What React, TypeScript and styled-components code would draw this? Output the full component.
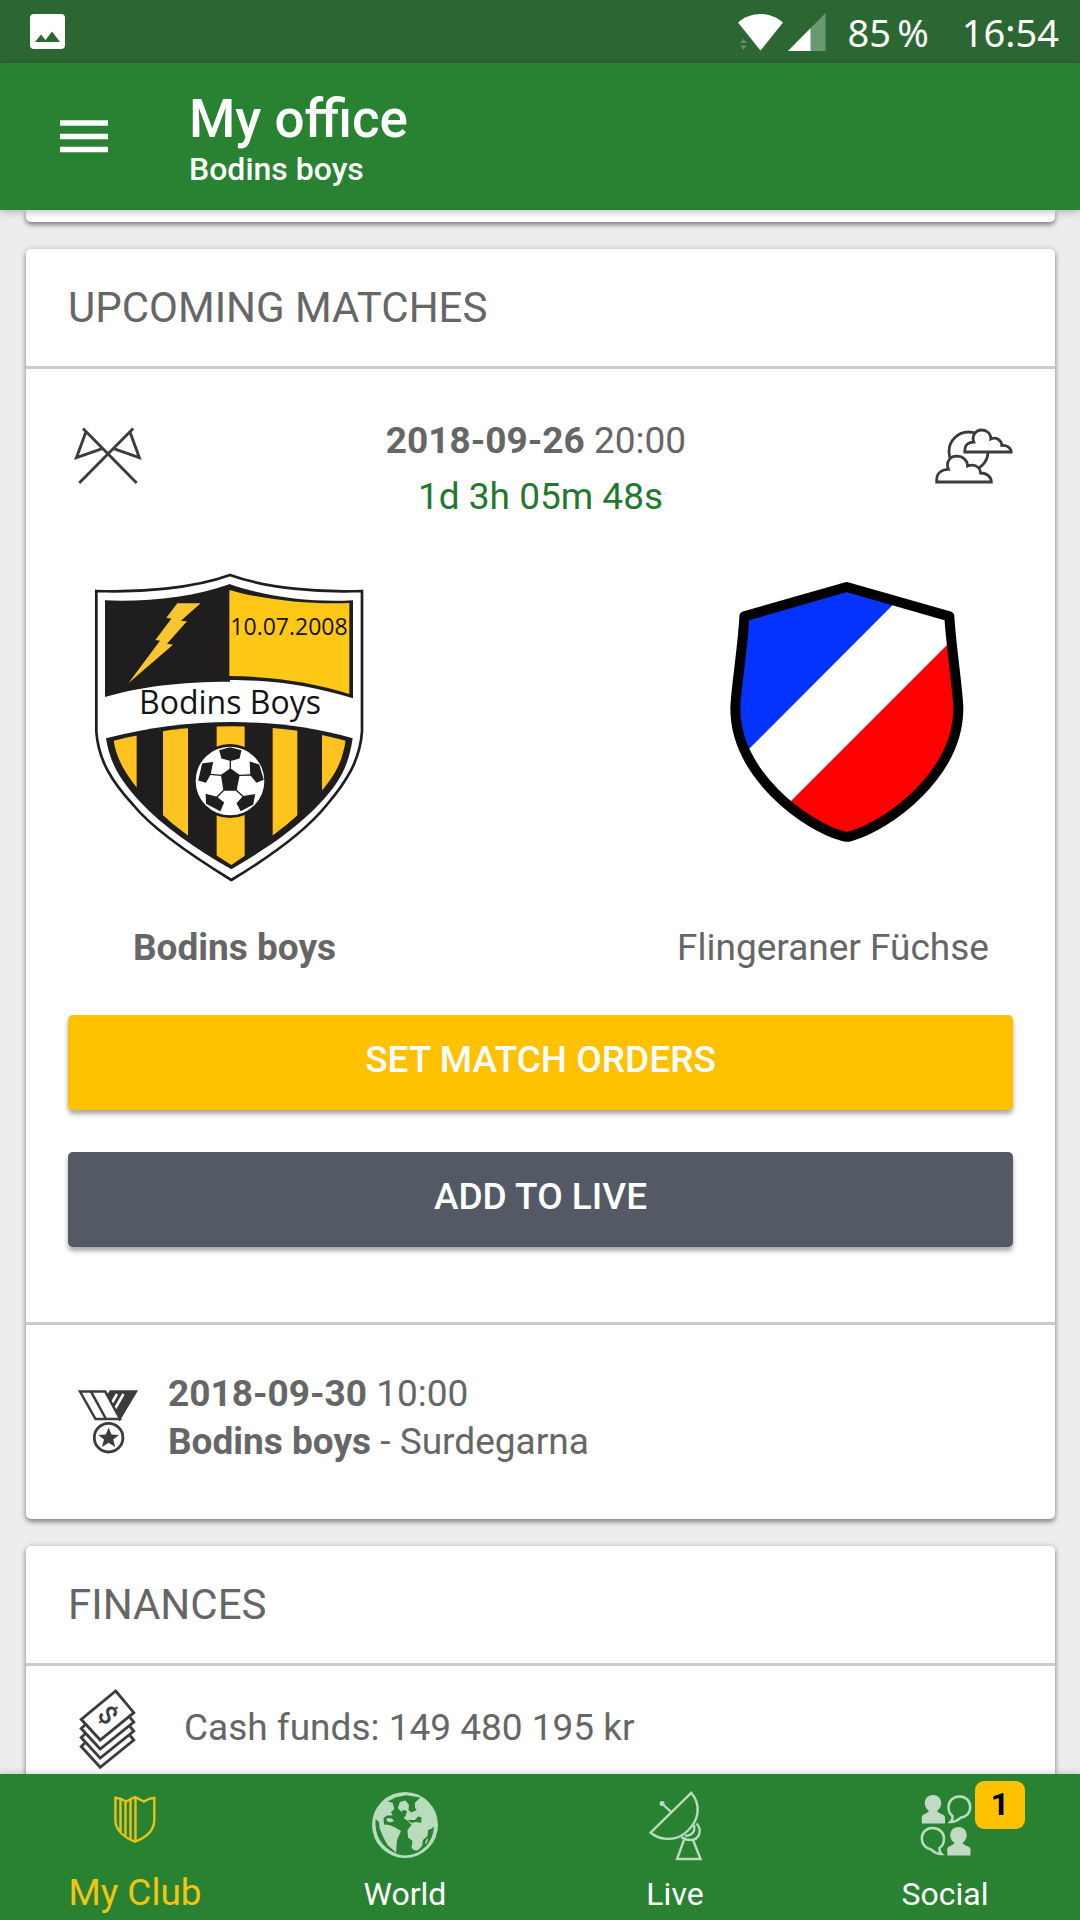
import React from "react";
import styled, { createGlobalStyle } from "styled-components";

const GlobalStyle = createGlobalStyle`
  *, *::before, *::after { box-sizing: border-box; }
  body {
    margin: 0;
    background: #ededed;
    font-family: Roboto, "Noto Sans", sans-serif;
    color: #666;
  }
  h1, h2, p { margin: 0; }
  svg { display: block; overflow: visible; }
`;

const Screen = styled.div`
  height: 100vh;
  display: flex;
  flex-direction: column;
  overflow: hidden;
`;

const StatusBar = styled.div`
  flex: none;
  height: 63px;
  padding: 0 21px 0 30px;
  display: flex;
  align-items: center;
  justify-content: space-between;
  background: #2c6632;
  color: #fff;
  font: 400 38px/60px "Noto Sans", sans-serif;
`;

const StatusGroup = styled.div`
  display: flex;
  align-items: center;
`;

const Battery = styled.span`
  margin: 0 33px 0 20px;
`;

const Header = styled.header`
  flex: none;
  position: relative;
  z-index: 1;
  display: flex;
  align-items: center;
  gap: 75px;
  padding: 26px 54px 21px;
  background: #298132;
  color: #fff;
  box-shadow: 0 2px 8px rgba(0, 0, 0, 0.25);
`;

const MenuButton = styled.button`
  padding: 0;
  border: 0;
  background: none;
  color: inherit;
`;

const Title = styled.h1`
  font-size: 53px;
  font-weight: 500;
  line-height: 60px;
`;

const Subtitle = styled.p`
  font-size: 32px;
  font-weight: 500;
  line-height: 40px;
`;

const Content = styled.main`
  flex: 1;
  min-height: 0;
  overflow: hidden;
  padding: 0 25px 0 26px;
  display: flex;
  flex-direction: column;
  gap: 27px;
`;

const Card = styled.section`
  flex: none;
  background: #fff;
  border-radius: 5px;
  box-shadow: 0 3px 5px rgba(0, 0, 0, 0.4), 0 0 6px rgba(0, 0, 0, 0.14);
`;

const CardEnd = styled(Card)`
  height: 12px;
  border-radius: 0 0 5px 5px;
`;

const CardTitle = styled.h2`
  padding: 34px 42px 33px;
  border-bottom: 3px solid #cbcbcb;
  font-size: 42px;
  font-weight: 400;
  line-height: 50px;
  text-transform: uppercase;
`;

const MatchBody = styled.div`
  padding: 44px 42px 75px;
  border-bottom: 3px solid #cbcbcb;
`;

const MatchInfo = styled.div`
  display: flex;
  justify-content: space-between;
  text-align: center;
  font-size: 37px;
  line-height: 56px;
`;

const Countdown = styled.p`
  color: #24782e;
`;

const Teams = styled.div`
  display: flex;
  justify-content: space-between;
  margin: 44px 0 43px;
`;

const Team = styled.div<{ $width: number; $home?: boolean }>`
  width: ${(p) => p.$width}px;
  display: flex;
  flex-direction: column;
  gap: 39px;
  text-align: center;
  font-size: 37px;
  line-height: 48px;
  font-weight: ${(p) => (p.$home ? 700 : 400)};
`;

const Actions = styled.div`
  display: flex;
  flex-direction: column;
  gap: 42px;
`;

const ActionButton = styled.button<{ $color: string }>`
  height: 95px;
  padding: 0 0 5px;
  border: 0;
  border-radius: 5px;
  background: ${(p) => p.$color};
  color: #fff;
  font: 500 37px/48px Roboto, sans-serif;
  text-transform: uppercase;
  box-shadow: 0 4px 5px rgba(0, 0, 0, 0.35);
`;

const NextMatch = styled.div`
  display: flex;
  align-items: center;
  gap: 20px;
  padding: 45px 42px 53px;
  font-size: 37px;
  line-height: 48px;
`;

const FinanceRow = styled.div`
  display: flex;
  align-items: center;
  gap: 36px;
  height: 124px;
  padding: 0 42px;
  font-size: 37px;
  line-height: 48px;
`;

const TabBar = styled.nav`
  flex: none;
  position: relative;
  z-index: 1;
  height: 146px;
  display: grid;
  grid-template-columns: repeat(4, 1fr);
  background: #298132;
  box-shadow: 0 -2px 6px rgba(0, 0, 0, 0.14);
`;

const Tab = styled.a<{ $active?: boolean }>`
  position: relative;
  display: flex;
  flex-direction: column;
  align-items: center;
  gap: 11px;
  padding-top: 16px;
  color: ${(p) => (p.$active ? "#f2c511" : "#fff")};
  text-decoration: none;
  font-size: 37px;
  line-height: 44px;

  svg {
    color: ${(p) => (p.$active ? "#e6c417" : "#b9dcbd")};
  }

  span {
    font-size: ${(p) => (p.$active ? 37 : 32)}px;
  }
`;

const Badge = styled.b`
  position: absolute;
  top: 7px;
  left: calc(50% + 30px);
  width: 50px;
  height: 48px;
  border-radius: 9px;
  background: #ffc100;
  color: #000;
  font-size: 32px;
  line-height: 47px;
  text-align: center;
`;

const PictureIcon = () => (
  <svg width="35" height="35" viewBox="0 0 35 35" aria-hidden="true">
    <rect width="35" height="35" rx="4" fill="#fff" />
    <path d="M5 28 L11 20.500 L15.500 26 L22 17.500 L30 28 Z" fill="#2c6632" />
  </svg>
);

const SignalIcons = () => (
  <svg width="90" height="40" viewBox="0 0 90 40" aria-hidden="true">
    <path d="M1 10.500 C14 -1 33 -1 46 10.500 L23.500 38.500 Z" fill="#fff" />
    <path d="M3 31 L6.500 26.500 L10 31 Z M3 33.500 L6.500 38 L10 33.500 Z" fill="#5c9062" />
    <path d="M88.500 1 V39 H51 Z" fill="#6b9a70" />
    <path d="M73.500 16.200 V39 H51 Z" fill="#fff" />
  </svg>
);

const MenuIcon = () => (
  <svg width="60" height="60" viewBox="0 0 60 60" aria-hidden="true">
    <path d="M6 14 H54 M6 27.500 H54 M6 40.500 H54" stroke="currentColor" strokeWidth="5.500" />
  </svg>
);

const FlagsIcon = () => (
  <svg width="80" height="88" viewBox="0 0 80 88" fill="none" stroke="#3c3c3c" strokeWidth="2.900" role="img" aria-label="Friendly">
    <path d="M15 15.500 L68.700 70 M65.200 15.500 L11.200 70" />
    <path d="M17.900 19 L8.500 44.500 L35 35.300 M62 19 L71.300 44.500 L45 35.300" />
  </svg>
);

const WeatherIcon = () => (
  <svg width="80" height="88" viewBox="1 1 80 88" fill="#fff" stroke="#3c3c3c" strokeWidth="2.800" role="img" aria-label="Cloudy">
    <circle cx="36.500" cy="39.500" r="19.500" />
    <path d="M4.700 70 V67.500 C4.700 61 10 57.300 16.400 57.300 C13.500 50 18 44.200 24.700 44.200 C31 44.200 35.500 48.500 35.500 54 C42 51.500 48 54.500 48.600 61 C55 61 59.300 65 59.300 70 Z" />
    <path d="M32.800 40 V38 C32.800 33.500 36 30 41.800 30 C39.500 24 43.500 18 49.800 18 C55 18 59.200 22 58.800 27 C64 24.500 69.500 28 69.800 33.500 C75 33 79.200 36 79.200 40 Z" />
  </svg>
);

const MedalIcon = () => (
  <svg width="80" height="80" viewBox="0 0 80 80" fill="none" stroke="#3c3c3c" strokeWidth="2.500" role="img" aria-label="League">
    <path d="M42.500 13.600 H67.900 L51.500 41 L39.500 19 Z" fill="#3c3c3c" />
    <path d="M49 16 L43.500 25.500 M55.500 16 L46.500 31.500" stroke="#fff" strokeWidth="2.600" />
    <path d="M12 13.600 H37.300 L52 41 H27.500 Z" fill="#fff" />
    <path d="M23 13.600 L38 41" />
    <circle cx="40.600" cy="59.700" r="14.300" strokeWidth="2.800" />
    <path d="M40.600 49.500 L43.500 56.500 L51 56.900 L45.200 61.600 L47.200 69 L40.600 64.800 L34 69 L36 61.600 L30.200 56.900 L37.700 56.500 Z" fill="#3c3c3c" stroke="none" />
  </svg>
);

const CashStack = styled.svg`
  text {
    font: 500 26px Roboto, sans-serif;
    fill: #3c3c3c;
    stroke: none;
    text-anchor: middle;
  }
`;

const CashIcon = () => (
  <CashStack width="80" height="88" viewBox="0 0 80 88" fill="none" stroke="#3c3c3c" strokeWidth="2.800" aria-hidden="true">
    <path d="M47.700 7 L65.800 28.700 L32.200 56 L13.200 35.300 Z" />
    <path d="M17 41 L13.200 44.500 L32.200 65 L65.800 38 L62 33.500" />
    <path d="M17 50 L13.200 53.500 L32.200 74.200 L65.800 47 L62 42.500" />
    <path d="M17 59 L13.200 62.500 L32.200 83.300 L65.800 56 L62 51.500" />
    <text x="0" y="9" transform="translate(40 31) rotate(48)">$</text>
  </CashStack>
);

const CrestText = styled.text<{ $size: number }>`
  font: 400 ${(p) => p.$size}px "Open Sans", "Noto Sans", sans-serif;
  fill: #141414;
  text-anchor: middle;
`;

const HomeCrest = () => (
  <svg width="333" height="316" viewBox="-12 9 333 316" role="img" aria-label="Bodins boys crest">
    <defs>
      <clipPath id="stripes">
        <path d="M101 542 C330 484 590 484 797 542 C785 610 765 650 705 715 C640 785 550 850 454 915 C350 850 260 785 195 712 C140 650 110 600 101 542 Z" />
      </clipPath>
    </defs>
    <g transform="scale(0.333333)">
      <path
        d="M49 93 C180 98 340 85 450 45 C560 85 720 98 846 93 V515 C840 600 800 665 740 735 C680 810 570 890 454 960 C340 890 220 810 160 735 C95 665 55 600 49 515 Z"
        fill="#fff"
        stroke="#1f1d1e"
        strokeWidth="8"
      />
      <path d="M75 121 C200 126 340 112 450 72 V365 C300 365 180 380 75 411 Z" fill="#1f1d1e" />
      <path d="M448 72 C560 112 700 128 819 121 V415 C700 380 600 360 445 360 Z" fill="#1f1d1e" />
      <path d="M448 90 C560 122 700 134 808 129 V402 C700 368 590 350 448 348 Z" fill="#ffc716" />
      <path d="M292 130 H362 L303 182 L321 184 L261 251 L279 254 L145 370 L240 242 L226 240 L274 176 L259 173 Z" fill="#f6c631" />
      <path
        d="M78 535 C330 470 590 470 818 535 C805 620 780 665 720 730 C650 805 560 865 454 928 C345 865 250 800 180 725 C120 660 90 610 78 535 Z"
        fill="#1f1d1e"
      />
      <path d="M95 480 H170 V930 H95 Z M249 480 H324 V930 H249 Z M410 480 H494 V930 H410 Z M578 480 H652 V930 H578 Z M726 480 H800 V930 H726 Z" fill="#ffc320" clipPath="url(#stripes)" />
      <circle cx="450" cy="663" r="111" fill="#1f1d1e" />
      <circle cx="450" cy="663" r="103" fill="#fff" />
      <g fill="#1f1d1e" stroke="#1f1d1e" strokeWidth="4">
        <path d="M451 627 L477 646 L468 690 L432 690 L425 646 Z" />
        <path d="M420 572 L450 564 L482 572 L477 594 L452 601 L426 594 Z" />
        <path d="M397 608 L368 612 L357 660 L377 666 L390 643 Z" />
        <path d="M511 607 L536 615 L549 658 L530 666 L513 645 Z" />
        <path d="M379 704 L410 712 L430 728 L420 751 L380 730 Z" />
        <path d="M523 705 L490 710 L472 730 L483 751 L518 732 Z" />
        <path d="M451 601 V627 M390 643 L425 646 M513 645 L477 646 M410 712 L432 690 M490 710 L468 690" />
      </g>
    </g>
    <CrestText x="209" y="75" $size={23}>10.07.2008</CrestText>
    <CrestText x="150" y="154" $size={32}>Bodins Boys</CrestText>
  </svg>
);

const AwayCrest = () => (
  <svg width="360" height="316" viewBox="-141 27 1080 948" role="img" aria-label="Flingeraner Füchse crest">
    <defs>
      <clipPath id="away">
        <path d="M440 82 L748 169 C752 250 775 400 775 445 C775 640 570 790 440 830 C310 790 106 640 106 445 C106 400 130 250 133 169 Z" />
      </clipPath>
    </defs>
    <g clipPath="url(#away)">
      <path d="M0 0 H713 L0 714 Z" fill="#0433ff" />
      <path d="M996 0 V996 H0 Z" fill="#fe0000" />
    </g>
    <path
      d="M440 81 L748 169 C752 250 775 400 775 445 C775 640 570 795 450 829 Q440 832 430 829 C310 795 106 640 106 445 C106 400 130 250 133 169 Z"
      fill="none"
      stroke="#000"
      strokeWidth="30"
      strokeLinejoin="round"
    />
  </svg>
);

const ClubIcon = () => (
  <svg width="70" height="70" viewBox="0 0 70 70" fill="none" stroke="currentColor" strokeWidth="2.400" aria-hidden="true">
    <path d="M15.400 7.700 Q21 8 26 11.500 L35 7 L44 11.500 Q49 8 54.300 7.700 V30 C54.300 40 46 47.500 35 51.700 C24 47.500 15.400 40 15.400 30 Z" />
    <path d="M20.500 9 V42 M25.500 11 V46.500 M30.500 9.500 V49.500 M35.500 7 V51" />
  </svg>
);

const WorldIcon = () => (
  <svg width="70" height="70" viewBox="0 0 70 70" aria-hidden="true">
    <circle cx="35" cy="35" r="33" fill="currentColor" />
    <g fill="#298132">
      <path d="M17.500 11.500 L26 7.300 L36.300 5.300 L50.400 7.500 L45 12.700 L45 17.500 L46.700 20 L41.500 22.500 L38.500 20 L39 15 L35.500 10.500 L30 12 L27.700 18 L31.500 22 L33 20 L37 21 L35.500 26 L33.500 28 L38 31 L41.500 35 L37.500 40 L38 47.500 L42.500 51 L41.500 57.500 Q44 62 48.400 60 L52 56 L58 52 Q52 64.500 35 65.500 Q30 65.500 26 63.500 L27 50 L31 41 L24.300 37 L19 35 L14 34.500 L13.500 28 L17 25.500 L22.600 25.500 L21 22 L24.300 19 L22.600 12.800 Z" />
      <path d="M5.500 29 L9 32 L9.500 38 L13 46.700 L17.500 55 L25 61.500 L26 63.500 Q4 54 5.500 29 Z" />
      <path d="M37.400 30 L41.500 33 L46 32 L51.300 32.700 L51.500 27.300 L48 26.500 L45 30 Z" />
      <path d="M64 36.700 Q63.500 48 55.300 57.300 L52 57 L53 50 L57.500 46 L58 40 L61 39 Z" />
    </g>
    <path d="M17 28 L22 28.500 L24 31 L20 32.500 L16.500 31 Z M56 50 L58 48 L57 53 L55 54 Z" fill="currentColor" />
  </svg>
);

const LiveIcon = () => (
  <svg width="70" height="70" viewBox="0 0 70 70" fill="none" stroke="currentColor" strokeWidth="2.400" aria-hidden="true">
    <path d="M51.200 2.800 L10.600 42.700 C21 51 37 51.500 47.500 41 C59 30 61.500 15 51.200 2.800 Z" />
    <path d="M31 22 L22 13.500" />
    <circle cx="22" cy="13.500" r="2.500" fill="currentColor" stroke="none" />
    <path d="M56.500 33.500 C62 39 60.500 50 50 50 Q45 50 41.500 47 M54 35 Q56 45 45 46" />
    <path d="M44 50 L37 69 H60.600 L53 50" />
  </svg>
);

const SocialIcon = () => (
  <svg width="70" height="70" viewBox="0 0 70 70" aria-hidden="true">
    <g fill="#c0dac4">
      <path id="person" d="M23 5 C17.500 5 14.800 9 14.800 13.500 C14.800 17 17 19.500 19 21 C17 24 12 24 11.800 27 V33.500 H35 V27 C34.500 24 29 24 27 21 C29 19.500 31.200 17 31.200 13.500 C31.200 9 28.500 5 23 5 Z" />
      <use href="#person" x="25.500" y="32" />
    </g>
    <g fill="none" stroke="currentColor" strokeWidth="2.500">
      <path d="M49.500 6.500 C56 6.500 60.200 11 60.200 17 C60.200 23 56 27 51 27.500 Q46 32 40.500 32 Q43 29.500 42.500 26 C39.500 24 38.500 20.500 38.500 17 C38.500 11 43 6.500 49.500 6.500 Z" />
      <path d="M22.500 38 C16 38 11.800 42.500 11.800 48.500 C11.800 54.500 16 58.500 21 59.500 Q26 64 31.500 64 Q29 61.500 29.500 58 C32.500 56 34 52.500 34 48.500 C34 42.500 29 38 22.500 38 Z" />
    </g>
  </svg>
);

const tabs = [
  { label: "My Club", Icon: ClubIcon, active: true },
  { label: "World", Icon: WorldIcon },
  { label: "Live", Icon: LiveIcon },
  { label: "Social", Icon: SocialIcon, count: 1 },
];

export default function App() {
  return (
    <Screen>
      <GlobalStyle />
      <StatusBar>
        <PictureIcon />
        <StatusGroup>
          <SignalIcons />
          <Battery>85{"\u2009"}%</Battery>
          <time>16:54</time>
        </StatusGroup>
      </StatusBar>
      <Header>
        <MenuButton aria-label="Menu">
          <MenuIcon />
        </MenuButton>
        <div>
          <Title>My office</Title>
          <Subtitle>Bodins boys</Subtitle>
        </div>
      </Header>
      <Content>
        <CardEnd />
        <Card>
          <CardTitle>Upcoming matches</CardTitle>
          <MatchBody>
            <MatchInfo>
              <FlagsIcon />
              <div>
                <p>
                  <b>2018-09-26</b> 20:00&nbsp;
                </p>
                <Countdown>1d 3h 05m 48s</Countdown>
              </div>
              <WeatherIcon />
            </MatchInfo>
            <Teams>
              <Team $width={333} $home>
                <HomeCrest />
                <p>Bodins boys</p>
              </Team>
              <Team $width={360}>
                <AwayCrest />
                <p>Flingeraner Füchse</p>
              </Team>
            </Teams>
            <Actions>
              <ActionButton $color="#ffc100">Set match orders</ActionButton>
              <ActionButton $color="#535a66">Add to live</ActionButton>
            </Actions>
          </MatchBody>
          <NextMatch>
            <MedalIcon />
            <div>
              <p>
                <b>2018-09-30</b> 10:00
              </p>
              <p>
                <b>Bodins boys</b> - Surdegarna
              </p>
            </div>
          </NextMatch>
        </Card>
        <Card>
          <CardTitle>Finances</CardTitle>
          <FinanceRow>
            <CashIcon />
            <p>Cash funds: 149 480 195 kr</p>
          </FinanceRow>
        </Card>
      </Content>
      <TabBar>
        {tabs.map(({ label, Icon, active, count }) => (
          <Tab key={label} href="#" $active={active}>
            <Icon />
            <div>
              <span>{label}</span>
            </div>
            {count && <Badge>{count}</Badge>}
          </Tab>
        ))}
      </TabBar>
    </Screen>
  );
}
